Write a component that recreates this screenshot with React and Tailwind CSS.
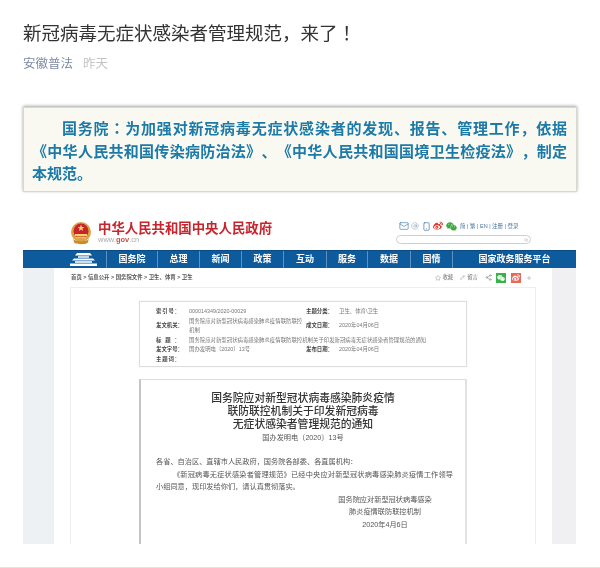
import { Mail, Smartphone, Star, Pencil, Share2, Plus, Search, AtSign } from "lucide-react"
import { FaWeibo, FaWeixin } from "react-icons/fa"

const NAV = [
  { label: "国务院", w: "w-[51px]" },
  { label: "总理", w: "w-[42px]" },
  { label: "新闻", w: "w-[42px]" },
  { label: "政策", w: "w-[42px]" },
  { label: "互动", w: "w-[43px]" },
  { label: "服务", w: "w-[41px]" },
  { label: "数据", w: "w-[43px]" },
  { label: "国情", w: "w-[42px]" },
  { label: "国家政务服务平台", w: "w-[123px]" },
]

const CJK = "font-['Liberation_Sans','Noto_Sans_CJK_SC',sans-serif]"
const CJK_CENTERED = "font-['Noto_Sans_CJK_KR','Noto_Sans_CJK_SC',sans-serif]"

function Emblem() {
  return (
    <svg width="22" height="24" viewBox="0 0 22 24" className="shrink-0">
      <circle cx="11" cy="11" r="10" fill="#d9a441" />
      <circle cx="11" cy="10" r="7.5" fill="#c8242c" />
      <path d="M11 3.5l.9 2.4 2.5.1-2 1.5.7 2.4-2.1-1.4-2.1 1.4.7-2.4-2-1.5 2.5-.1z" fill="#f3d36b" />
      <path d="M5 13h12v2H5z" fill="#f3d36b" />
      <path d="M6.5 15.5h9l1 2h-11z" fill="#e8c25a" />
      <path d="M3 18c3 3 13 3 16 0l-1.500 4c-3 1.600-10 1.600-13 0z" fill="#c98a2e" />
    </svg>
  )
}

function Gate() {
  return (
    <svg width="27" height="13" viewBox="0 0 27 13" fill="#fff">
      <path d="M7 0h13l2 2.500H5z" />
      <path d="M8 3h11v2H8z" opacity=".75" />
      <path d="M4 5.500h19l2 2H2z" />
      <path d="M5 8h17v2H5z" opacity=".8" />
      <path d="M0 10.500h27V13H0z" />
    </svg>
  )
}

function InfoLabel({ children }) {
  return <span className="block w-[24px] font-bold text-[#444] [text-align-last:justify]">{children}</span>
}

export default function App() {
  return (
    <div className={`${CJK} w-[600px] h-[568px] bg-white flex flex-col overflow-hidden [text-spacing-trim:space-all]`}>
      <div className="pl-[23px] pt-[19px]">
        <h1 className={`${CJK_CENTERED} text-[18.5px] leading-[26px] font-normal text-[#333] blur-[0.3px]`}>
          新冠病毒无症状感染者管理规范，来了！
        </h1>
        <div className="mt-[11px] flex gap-[10px] text-[12.5px] leading-[16px] blur-[0.3px]">
          <span className="text-[#7d8aa3]">安徽普法</span>
          <span className="text-[#c4c4c4]">昨天</span>
        </div>
      </div>

      <div className="mx-[23px] mt-[35px] h-[85px] border border-[#d8d8d0] bg-[#f9f9f1] pl-[8px] pr-[9px] pt-[9px] shadow-[0_-1px_3px_rgba(0,0,0,0.35)]">
        <p className={`${CJK_CENTERED} text-[15px] leading-[22.5px] font-bold text-[#1c7aa8] text-justify indent-[30px] blur-[0.25px]`}>
          国务院：为加强对新冠病毒无症状感染者的发现、报告、管理工作，依据《中华人民共和国传染病防治法》、《中华人民共和国国境卫生检疫法》，制定本规范。
        </p>
      </div>

      <div className="mx-[23px] mt-[18px] w-[553px] h-[334px] flex flex-col blur-[0.4px]">
        <div className="h-[40px] shrink-0 flex justify-between">
          <div className="flex items-start pl-[47px] pt-[11px] gap-[6px]">
            <Emblem />
            <div>
              <div className="text-[13.4px] leading-[15px] font-bold text-[#c8242c]">中华人民共和国中央人民政府</div>
              <div className="text-[7.5px] leading-[8px] text-[#aaa]">www.<span className="text-[#c8544c] font-bold">gov</span>.cn</div>
            </div>
          </div>
          <div className="w-[135px] mr-[45px] pt-[11px] flex flex-col">
            <div className="flex items-center h-[10px] text-[#3d78a8] pl-[3px]">
              <Mail size={10} strokeWidth={1.5} />
              <AtSign size={8} strokeWidth={1.5} className="ml-[2px] text-[#7f9cb5]" />
              <Smartphone size={9} strokeWidth={2} className="ml-[3px] text-[#4a7fa8]" />
              <FaWeibo size={10} className="ml-[2px] text-[#d8382c]" />
              <FaWeixin size={11} className="ml-[3px] text-[#3cab3c]" />
              <span className="ml-[3px] text-[5.5px] whitespace-nowrap text-[#4a74a0]">简 | 繁 | EN | 注册 | 登录</span>
            </div>
            <div className="mt-[4px] h-[9px] rounded-full border border-[#cfcfcf] flex items-center justify-end pr-[2px]">
              <Search size={4} className="text-[#999]" />
            </div>
          </div>
        </div>

        <nav className="h-[18px] shrink-0 flex bg-[#0d5a9c] border-t border-[#0a4a85] text-white text-[9px] font-bold">
          <div className="w-[84px] pl-[47px] flex items-center border-r border-[#5d92c0]">
            <Gate />
          </div>
          {NAV.map((n, i) => (
            <div key={n.label} className={`${n.w} flex items-center justify-center ${i < NAV.length - 1 ? "border-r border-[#5d92c0]" : ""}`}>
              {n.label}
            </div>
          ))}
        </nav>

        <div className="flex-1 min-h-0 flex">
          <div className="w-[31px] shrink-0 bg-[#eef1f3]" />
          <div className="flex-1 min-w-0 flex flex-col">
            <div className="h-[19px] shrink-0 flex items-center justify-between pl-[17px] pr-[20px] text-[5.4px] text-[#555]">
              <span className="font-bold">首页 &gt; 信息公开 &gt; 国务院文件 &gt; 卫生、体育 &gt; 卫生</span>
              <div className="flex items-center text-[#777]">
                <Star size={6} strokeWidth={1.5} />
                <span className="ml-[1px]">收藏</span>
                <Pencil size={5} strokeWidth={1.5} className="ml-[7px]" />
                <span className="ml-[2px]">留言</span>
                <Share2 size={7} strokeWidth={1.5} className="ml-[7px]" />
                <span className="ml-[4px] w-[10px] h-[10px] bg-[#37b34a] flex items-center justify-center"><FaWeixin size={8} className="text-white" /></span>
                <span className="ml-[5px] w-[10px] h-[10px] bg-[#e8695a] flex items-center justify-center"><FaWeibo size={8} className="text-white" /></span>
                <Plus size={6} strokeWidth={1.5} className="ml-[5px]" />
              </div>
            </div>

            <div className="mx-[16px] flex-1 min-h-0 border-x border-t border-[#eee] px-[68px] pt-[13px]">
              <div className="h-[66px] border border-[#ddd] shadow-[0_0_1px_rgba(0,0,0,0.1)] pl-[16px] pt-[5px] text-[5.4px] leading-[9.5px] text-[#777] whitespace-nowrap">
                <div className="grid grid-cols-[33px_117px_33px_1fr]">
                  <InfoLabel>索引号：</InfoLabel><span>000014349/2020-00029</span>
                  <InfoLabel>主题分类：</InfoLabel><span>卫生、体育\卫生</span>
                  <div className="self-center"><InfoLabel>发文机关：</InfoLabel></div>
                  <span className="whitespace-normal">国务院应对新型冠状病毒感染肺炎疫情联防联控机制</span>
                  <div className="self-center"><InfoLabel>成文日期：</InfoLabel></div>
                  <span className="self-center">2020年04月06日</span>
                  <InfoLabel>标题：</InfoLabel>
                  <span className="col-span-3">国务院应对新型冠状病毒感染肺炎疫情联防联控机制关于印发新冠病毒无症状感染者管理规范的通知</span>
                  <InfoLabel>发文字号：</InfoLabel><span>国办发明电〔2020〕13号</span>
                  <InfoLabel>发布日期：</InfoLabel><span>2020年04月06日</span>
                  <InfoLabel>主题词：</InfoLabel>
                </div>
              </div>

              <div className="mt-[12px] h-[165px] border-l-2 border-l-[#c4c4c4] border-r-2 border-r-[#e2e2e2] border-t border-t-[#ddd] pt-[12px] text-[#555]">
                <div className="text-center text-[10.8px] leading-[13px] font-medium text-[#333]">
                  <div>国务院应对新型冠状病毒感染肺炎疫情</div>
                  <div>联防联控机制关于印发新冠病毒</div>
                  <div>无症状感染者管理规范的通知</div>
                </div>
                <div className="mt-[1px] text-center text-[7.2px] leading-[11px]">国办发明电〔2020〕13号</div>
                <div className="mt-[13px] pl-[15px] pr-[12px] text-[7.2px] leading-[12.6px]">
                  <p>各省、自治区、直辖市人民政府，国务院各部委、各直属机构：</p>
                  <p className="indent-[17px] text-justify">《新冠病毒无症状感染者管理规范》已经中央应对新型冠状病毒感染肺炎疫情工作领导小组同意，现印发给你们，请认真贯彻落实。</p>
                  <div className="ml-[176px] w-[106px] text-center whitespace-nowrap">
                    <p>国务院应对新型冠状病毒感染</p>
                    <p>肺炎疫情联防联控机制</p>
                    <p>2020年4月6日</p>
                  </div>
                </div>
              </div>
            </div>
          </div>
          <div className="w-[24px] shrink-0 bg-[#f0f0f2]" />
        </div>
      </div>

      <div className="mt-auto h-px bg-[#e4e4d8]" />
    </div>
  )
}
